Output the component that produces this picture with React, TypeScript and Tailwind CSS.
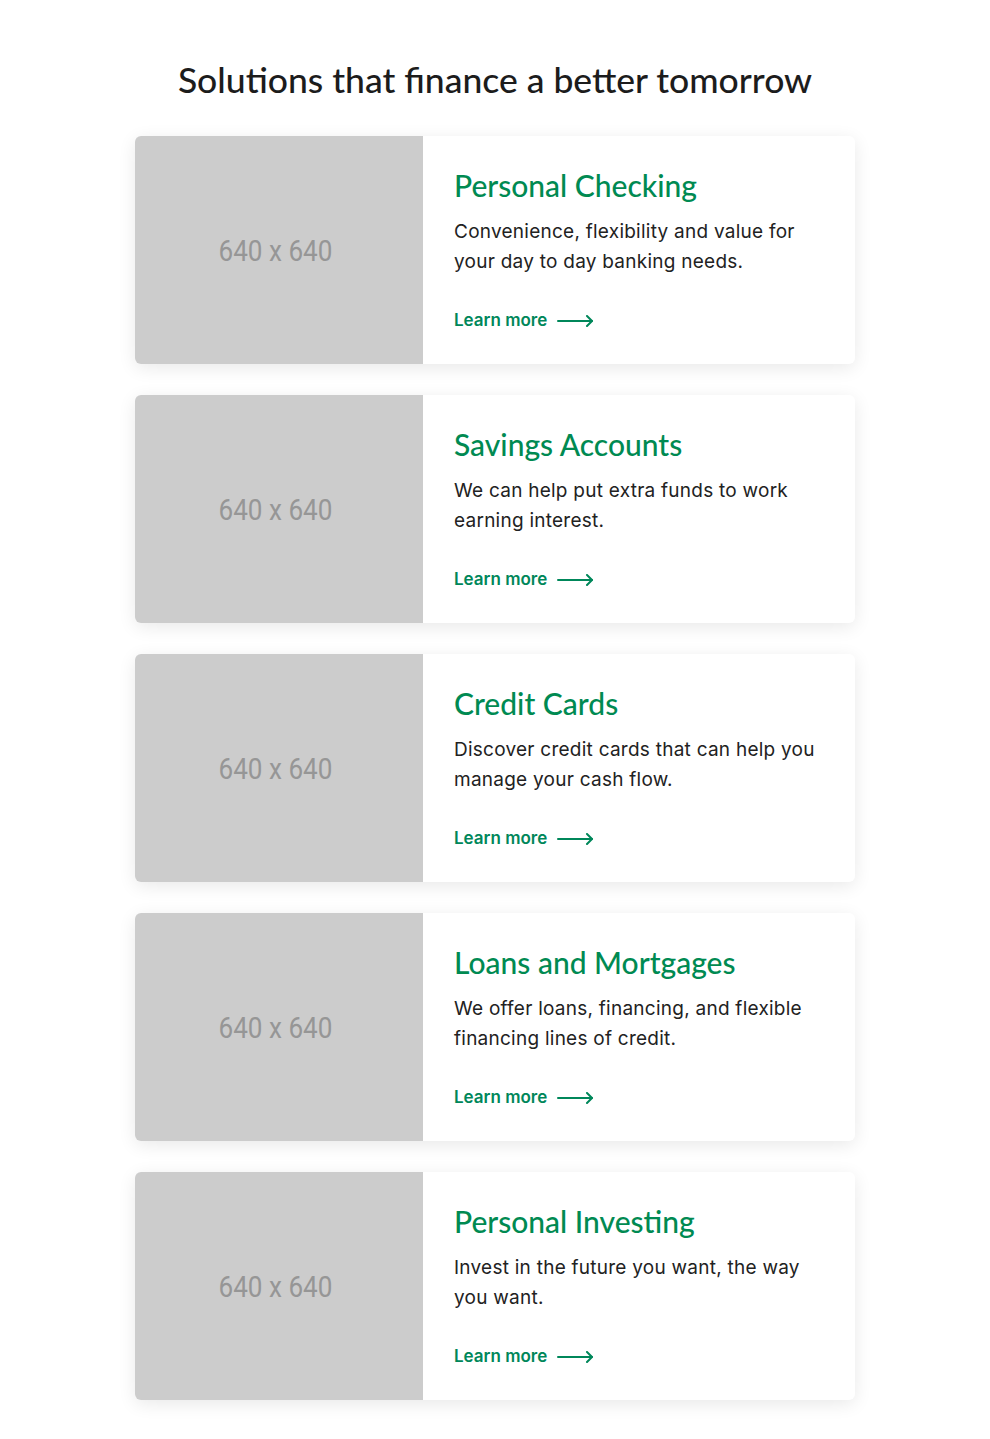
import React from 'react';

interface Solution {
  title: string;
  text: string;
}

const solutions: Solution[] = [
  { title: 'Personal Checking', text: 'Convenience, flexibility and value for your day to day banking needs.' },
  { title: 'Savings Accounts', text: 'We can help put extra funds to work earning interest.' },
  { title: 'Credit Cards', text: 'Discover credit cards that can help you manage your cash flow.' },
  { title: 'Loans and Mortgages', text: 'We offer loans, financing, and flexible financing lines of credit.' },
  { title: 'Personal Investing', text: 'Invest in the future you want, the way you want.' },
];

function Arrow() {
  return (
    <svg width="37" height="12" viewBox="0 0 37 12" fill="none" stroke="currentColor" strokeWidth="2" strokeLinecap="round" strokeLinejoin="round">
      <path d="M1 6h34" />
      <path d="M30 1l5 5-5 5" />
    </svg>
  );
}

export default function App() {
  return (
    <div className="min-h-screen bg-white pt-[57px] pb-10 font-['Inter',sans-serif]">
      <h1 className="text-center text-[35.5px] leading-[46px] text-[#1c1c1c] font-['Lato',sans-serif] font-medium">
        Solutions that finance a better tomorrow
      </h1>

      <div className="mx-auto mt-[33px] w-[720px] flex flex-col gap-[31px]">
        {solutions.map((s) => (
          <div key={s.title} className="flex h-[228px] rounded-md bg-white overflow-hidden shadow-[0_4px_18px_rgba(0,0,0,0.09)]">
            <div className="w-[288px] shrink-0 bg-[#cccccc] flex items-center justify-center pr-2">
              <span className="text-[30px] text-[#969696] font-['Roboto',sans-serif] scale-x-[0.87] inline-block">640 x 640</span>
            </div>
            <div className="flex-1 pl-[31px] pr-6 pt-[29px]">
              <h2 className="text-[30px] leading-[40px] text-[#008a52] font-['Lato',sans-serif] font-medium">{s.title}</h2>
              <p className="mt-[12px] text-[19px] leading-[30px] tracking-[0.25px] text-[#222]">{s.text}</p>
              <a href="#" className="mt-[31px] inline-flex items-center gap-[10px] text-[17px] font-semibold text-[#00875a]">
                Learn more
                <Arrow />
              </a>
            </div>
          </div>
        ))}
      </div>
    </div>
  );
}
